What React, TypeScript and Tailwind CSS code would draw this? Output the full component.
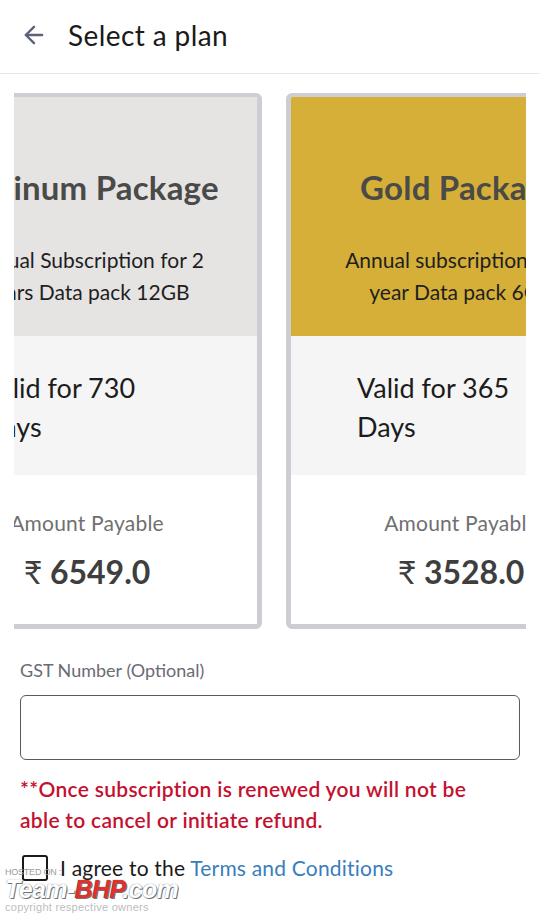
import React, { useState } from 'react';
import { ArrowLeft } from 'lucide-react';

interface Plan {
  name: string;
  desc: string[];
  validity: string[];
  price: string;
  headerBg: string;
}

const plans: Plan[] = [
  {
    name: 'Platinum Package',
    desc: ['Annual Subscription for 2', 'Years Data pack 12GB'],
    validity: ['Valid for 730', 'Days'],
    price: '6549.0',
    headerBg: 'bg-[#e5e4e3]',
  },
  {
    name: 'Gold Package',
    desc: ['Annual subscription for 1', 'year Data pack 6GB'],
    validity: ['Valid for 365', 'Days'],
    price: '3528.0',
    headerBg: 'bg-[#d5af38]',
  },
];

function PlanCard({ plan }: { plan: Plan }) {
  return (
    <div className="w-[350px] shrink-0 rounded-md border-[5px] border-t-4 border-[#cdcdd4] bg-white overflow-hidden">
      {/* Header */}
      <div className={`h-[239px] ${plan.headerBg} pt-[70px] text-center`}>
        <h2 className="text-[33px] leading-[40px] font-bold tracking-[0.2px] text-[#4a4a48] whitespace-nowrap">{plan.name}</h2>
        <div className="mt-[37px] text-[21px] leading-[32px] text-[#1f1f1f] whitespace-nowrap">
          {plan.desc.map((line) => (
            <div key={line}>{line}</div>
          ))}
        </div>
      </div>

      {/* Validity */}
      <div className="h-[139px] bg-[#f5f5f5] pt-[32px] pl-[66px] text-[27px] leading-[39px] text-[#1c1c1c]">
        {plan.validity.map((line) => (
          <div key={line} className="whitespace-nowrap">{line}</div>
        ))}
      </div>

      {/* Amount */}
      <div className="h-[149px] bg-white pt-[34px] text-center">
        <div className="text-[21px] leading-[28px] tracking-[0.2px] text-[#707070]">Amount Payable</div>
        <div className="mt-[15px] text-[32px] leading-[40px] font-bold text-[#3e3e3e] whitespace-nowrap">
          <span className="font-normal">₹</span> {plan.price}
        </div>
      </div>
    </div>
  );
}

export default function App() {
  const [agreed, setAgreed] = useState(false);
  const [gst, setGst] = useState('');

  return (
    <div className="relative w-[540px] h-[916px] overflow-hidden bg-white font-['Lato','Noto_Sans',sans-serif]">
      {/* Top bar */}
      <div className="h-[74px] flex items-center border-b border-[#e8e8ea] pl-[20px] pb-[4px]">
        <button className="text-[#5d6079]" aria-label="Back">
          <ArrowLeft size={28} strokeWidth={2} />
        </button>
        <h1 className="ml-[20px] text-[28px] tracking-[0.4px] text-[#1a1a1a]">Select a plan</h1>
      </div>

      {/* Plan carousel */}
      <div className="mx-[14px] pt-[19px] overflow-hidden">
        <div className="flex gap-[24px] ml-[-102px]">
          {plans.map((p) => (
            <PlanCard key={p.name} plan={p} />
          ))}
        </div>
      </div>

      {/* Form */}
      <div className="px-[20px]">
        <label className="block mt-[29px] text-[18px] leading-[24px] text-[#6b6b73]">GST Number (Optional)</label>
        <input
          value={gst}
          onChange={(e) => setGst(e.target.value)}
          className="mt-[13px] block w-full h-[65px] rounded-[6px] border-[1.5px] border-[#5a5a5a] px-3 text-[20px] outline-none"
        />
        <p className="mt-[13px] text-[21px] leading-[31px] font-semibold tracking-[0.3px] text-[#c4112f]">
          **Once subscription is renewed you will not be
          <br />
          able to cancel or initiate refund.
        </p>
        <div className="mt-[18px] flex items-center h-[30px]">
          <button
            onClick={() => setAgreed(!agreed)}
            className="w-[26px] h-[26px] rounded-[3px] border-2 border-[#1a1a1a] ml-[2px]"
            aria-label="Agree"
          >
            {agreed && <span className="block text-[16px] leading-none">✓</span>}
          </button>
          <span className="ml-[12px] text-[21px] tracking-[0.2px] text-[#1a1a1a]">
            I agree to the <span className="text-[#3a7dbd]">Terms and Conditions</span>
          </span>
        </div>
      </div>

      {/* Watermark overlay */}
      <div className="absolute left-[5px] bottom-[3px] leading-none select-none pointer-events-none font-['Liberation_Sans',sans-serif]">
        <div className="text-[9px] text-[#9a9a9a] tracking-tight">HOSTED ON :</div>
        <div className="text-[25px] font-bold italic tracking-tight [text-shadow:0_0_1px_#555,1px_1px_0_#777]">
          <span className="text-white">Team-</span>
          <span className="text-[#e0312a]">BHP</span>
          <span className="text-white">.com</span>
        </div>
        <div className="text-[11px] text-[#bdbdbd] tracking-wide">copyright respective owners</div>
      </div>
    </div>
  );
}
